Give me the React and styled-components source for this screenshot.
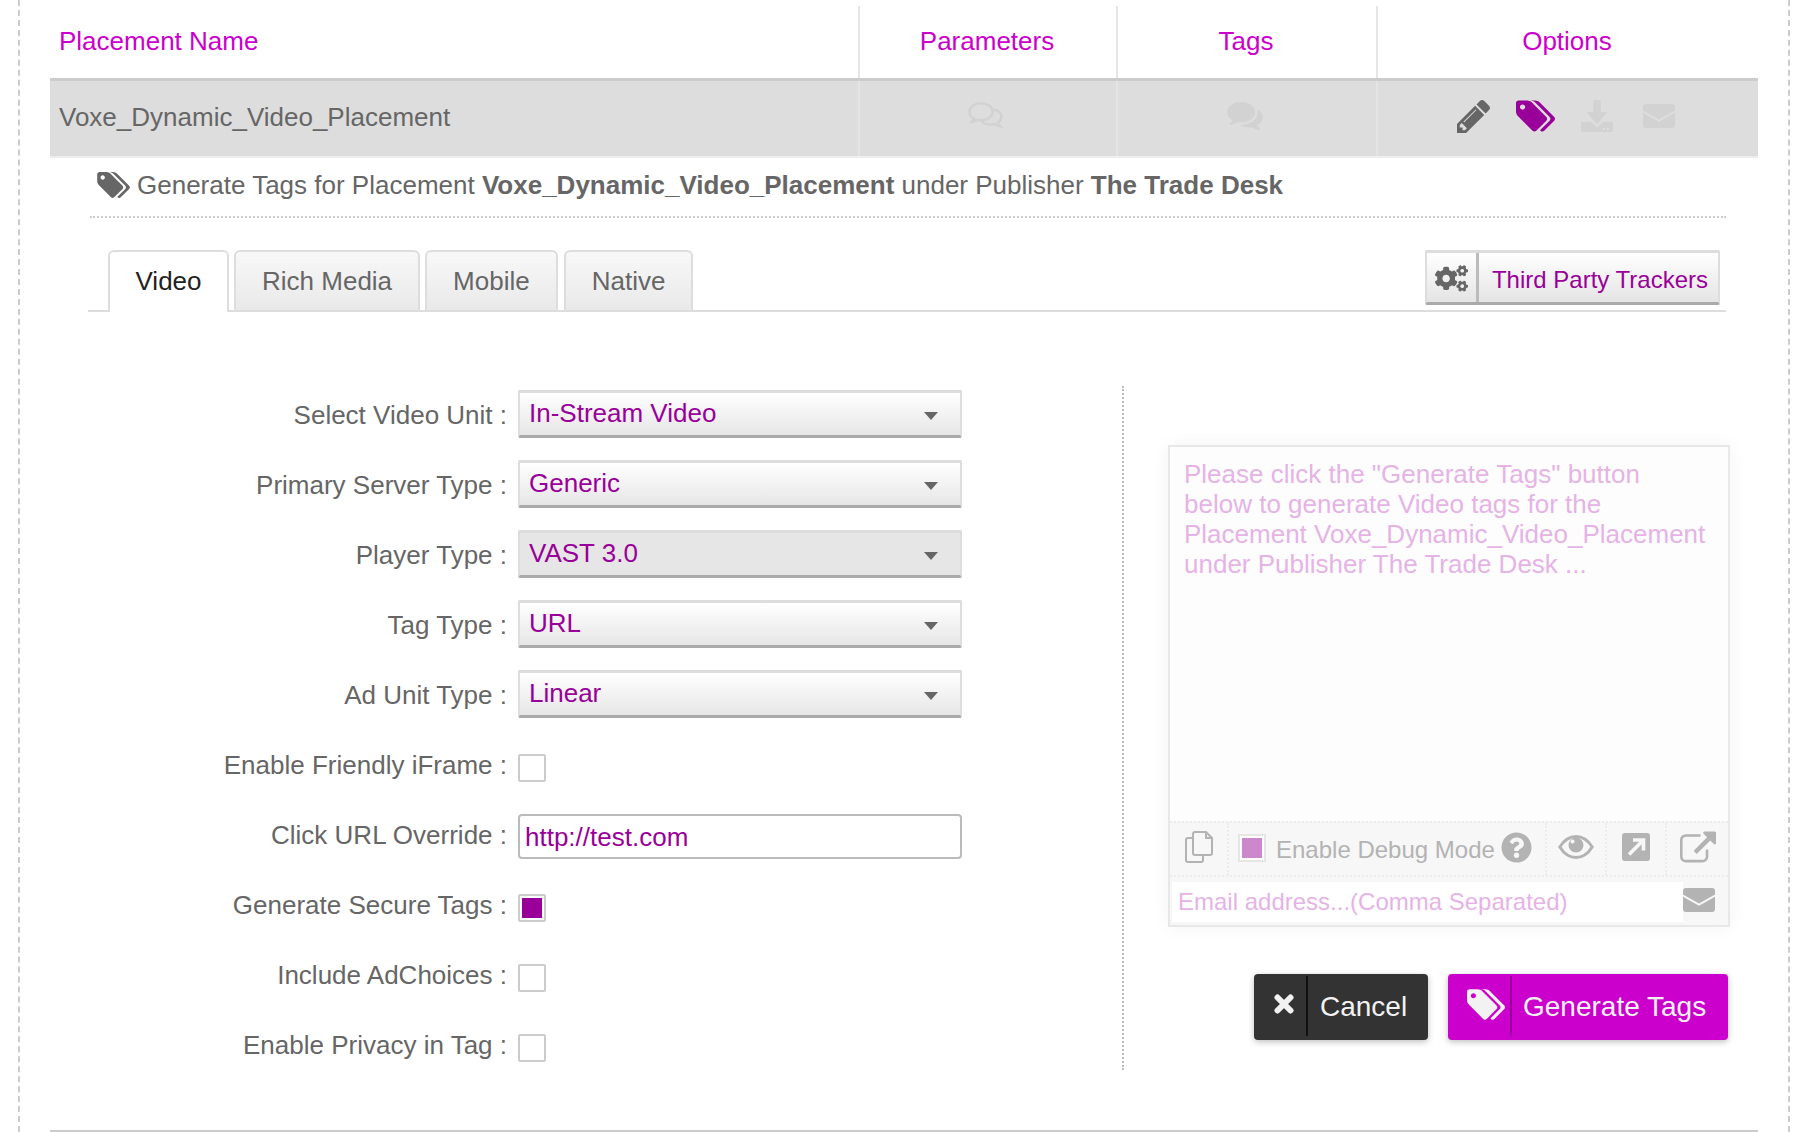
import React from 'react';
import styled, { createGlobalStyle } from 'styled-components';
import { FaCogs, FaQuestionCircle } from 'react-icons/fa';

const GlobalStyle = createGlobalStyle`
    html, body {
        margin: 0;
        padding: 0;
        background: #fff;
    }
    body {
        font-family: "Liberation Sans", Arial, sans-serif;
        font-size: 26px;
        color: #666;
    }
    * {
        box-sizing: border-box;
    }
`

const Frame = styled.div`
    height: 1132px;
    margin: 0 22px 0 18px;
    padding: 0 30px;
    border-left: 2px dashed #ccc;
    border-right: 2px dashed #ccc;
    overflow: hidden;
`

const HeaderRow = styled.div`
    display: grid;
    grid-template-columns: 808px 258px 260px 382px;
    height: 78px;
    padding-top: 6px;
`

const HeaderCell = styled.div`
    display: flex;
    align-items: center;
    justify-content: ${({ $left }) => ($left ? 'flex-start' : 'center')};
    padding: ${({ $left }) => ($left ? '0 0 2px 9px' : '0 2px 2px 0')};
    color: #cc00cc;
    border-left: ${({ $left }) => ($left ? 'none' : '2px solid #e6e6e6')};
`

const DataRow = styled.div`
    display: grid;
    grid-template-columns: 808px 258px 260px 382px;
    height: 80px;
    background: #ddd;
    border-top: 3px solid #ccc;
    border-bottom: 2px solid #eee;
`

const DataCell = styled.div`
    display: flex;
    align-items: center;
    justify-content: ${({ $left }) => ($left ? 'flex-start' : 'center')};
    gap: 26px;
    padding: ${({ $left }) => ($left ? '0 0 2px 9px' : '0 4px 5px 0')};
    border-left: ${({ $left }) => ($left ? 'none' : '2px solid #e4e4e4')};
`

const Heading = styled.div`
    display: flex;
    align-items: center;
    gap: 7px;
    margin: 0 32px 0 40px;
    padding: 12px 0 16px 7px;
    line-height: 30px;
    border-bottom: 2px dotted #ccc;
`

const TabBar = styled.div`
    display: flex;
    align-items: flex-start;
    height: 62px;
    margin: 32px 32px 0 38px;
    padding: 0 6px 0 20px;
    border-bottom: 2px solid #ddd;
`

const Tab = styled.div`
    display: flex;
    align-items: center;
    height: ${({ $active }) => ($active ? '62px' : '60px')};
    margin-right: ${({ $gap }) => $gap}px;
    padding: ${({ $active }) => ($active ? '0 25.5px 2px' : '0 26px')};
    border: 2px solid #ddd;
    border-bottom: none;
    border-radius: 6px 6px 0 0;
    color: ${({ $active }) => ($active ? '#222' : '#666')};
    background: ${({ $active }) => ($active ? '#fff' : 'linear-gradient(#f8f8f8, #e9e9e9)')};
`

const TrackerButton = styled.div`
    display: flex;
    height: 55px;
    margin-left: auto;
    border: 2px solid #ddd;
    border-top-width: 3px;
    border-bottom: 3px solid #aaa;
    border-radius: 2px;
    font-size: 24px;
    background: linear-gradient(#fff, #e4e4e4);
`

const TrackerIcon = styled.div`
    display: flex;
    align-items: center;
    justify-content: center;
    width: 52px;
    padding: 1px 0 0 1px;
    color: #666;
    border-right: 3px solid #bbb;
`

const TrackerLabel = styled.div`
    display: flex;
    align-items: center;
    padding: 4px 10px 0 13px;
    color: #990099;
`

const Body = styled.div`
    display: flex;
    align-items: flex-start;
    padding-top: 74px;
`

const FormColumn = styled.div`
    width: 1072px;
    padding-top: 4px;
`

const FormRow = styled.div`
    display: grid;
    grid-template-columns: 457px 444px;
    column-gap: 11px;
    align-items: start;
    height: 70px;
`

const Label = styled.div`
    line-height: 50px;
    text-align: right;
`

const Select = styled.div`
    display: flex;
    align-items: center;
    justify-content: space-between;
    height: 48px;
    padding: 0 22px 2px 9px;
    border: 2px solid #ddd;
    border-top-width: 3px;
    border-bottom: 3px solid #aaa;
    border-radius: 2px;
    color: #990099;
    background: ${({ $hover }) => ($hover ? '#e6e6e6' : 'linear-gradient(#fff, #e6e6e6)')};
`

const Arrow = styled.span`
    width: 0;
    height: 0;
    margin-top: 6px;
    border-left: 7px solid transparent;
    border-right: 7px solid transparent;
    border-top: 8px solid #666;
`

const UrlInput = styled.input`
    display: block;
    width: 100%;
    height: 45px;
    margin-top: 4px;
    padding: 2px 5px 0;
    border: 2px solid #bbb;
    border-radius: 4px;
    outline: none;
    color: #990099;
    font: inherit;
`

const Check = styled.div`
    width: 28px;
    height: 28px;
    margin-top: 14px;
    padding: 2px;
    border: 2px solid #ccc;
    border-radius: 2px;
    background: #fff;
    background-clip: padding-box;

    &::after {
        content: '';
        display: ${({ $on }) => ($on ? 'block' : 'none')};
        height: 100%;
        background: #990099;
    }
`

const RightColumn = styled.div`
    width: 608px;
    height: 684px;
    padding: 59px 0 0 44px;
    border-left: 2px dotted #bbb;
`

const Panel = styled.div`
    display: flex;
    flex-direction: column;
    height: 482px;
    border: 2px solid #e8e8e8;
    background: #fdfdfd;
    box-shadow: 0 0 18px rgba(0, 0, 0, 0.05);
`

const TagOutput = styled.div`
    flex: 1;
    padding: 12px 12px 0 14px;
    line-height: 30px;
    color: #e6b3e6;
`

const Toolbar = styled.div`
    display: grid;
    grid-template-columns: 59px 318px 60px 60px 61px;
    height: 54px;
    background: #f7f7f7;
    border-top: 2px dotted #ececec;
`

const ToolCell = styled.div`
    display: flex;
    align-items: center;
    justify-content: ${({ $wide }) => ($wide ? 'flex-start' : 'center')};
    padding: ${({ $wide }) => ($wide ? '0 0 4px 9px' : '0 0 4px')};
    color: #b3b3b3;
    font-size: 24px;
    white-space: nowrap;
    border-right: ${({ $last }) => ($last ? 'none' : '2px dotted #ececec')};
`

const DebugCheck = styled.div`
    flex: none;
    width: 28px;
    height: 28px;
    margin: 2px 10px 0 0;
    padding: 2px;
    border: 2px solid #e6e6e6;
    background: #fff;
    background-clip: padding-box;

    &::after {
        content: '';
        display: block;
        height: 100%;
        background: #cc88cc;
    }
`

const DebugLabel = styled.span`
    margin-right: 6px;
    padding-top: 6px;
`

const EmailRow = styled.div`
    display: flex;
    flex: none;
    justify-content: space-between;
    height: 50px;
    padding: 5px 13px 3px 2px;
    font-size: 24px;
    background: #f7f7f7;
    border-top: 2px dotted #ececec;
`

const EmailInput = styled.div`
    width: 518px;
    padding-left: 6px;
    line-height: 40px;
    color: #e6b3e6;
    background: #fff;
`

const MailSlot = styled.div`
    padding-top: 6px;
    color: #b3b3b3;
`

const Actions = styled.div`
    display: flex;
    justify-content: flex-end;
    gap: 20px;
    margin: 47px 2px 0 0;
`

const ActionButton = styled.div`
    display: flex;
    width: ${({ $width }) => $width}px;
    height: 66px;
    padding: 2px 0 4px;
    border-radius: 4px;
    color: #f2f2f2;
    font-size: 28px;
    background: ${({ $bg }) => $bg};
    box-shadow: 0 2px 6px rgba(0, 0, 0, 0.25);
`

const ActionIcon = styled.div`
    display: flex;
    flex: none;
    align-items: center;
    justify-content: center;
    width: ${({ $width }) => $width}px;
    padding: 0 0 4px ${({ $nudge }) => $nudge}px;
    border-right: 2px solid ${({ $line }) => $line};
`

const ActionLabel = styled.div`
    display: flex;
    align-items: center;
    padding: 2px 0 0 ${({ $pad }) => $pad}px;
`

const FooterRule = styled.div`
    height: 2px;
    margin-top: 40px;
    background: #ccc;
`

const Glyph = styled.svg`
    display: block;
    flex: none;
    width: ${({ $w }) => $w}px;
    height: ${({ $h }) => $h}px;
    margin-left: ${({ $ml }) => $ml || 0}px;
    color: ${({ $color }) => $color || 'inherit'};
    fill: currentColor;
`

const TAGS = 'M384 448q0-53-37.5-90.5t-90.5-37.5-90.5 37.5-37.5 90.5 37.5 90.5 90.5 37.5 90.5-37.5 37.5-90.5zm1067 576q0 53-37 90l-491 492q-39 37-91 37-53 0-90-37l-715-716q-38-37-64.5-101t-26.5-117v-416q0-52 38-90t90-38h416q53 0 117 26.5t102 64.5l715 714q37 39 37 91zm384 0q0 53-37 90l-491 492q-39 37-91 37-36 0-59-14t-53-45l470-470q37-37 37-90 0-52-37-91l-715-714q-38-38-102-64.5t-117-26.5h224q53 0 117 26.5t102 64.5l715 714q37 39 37 91z';
const PENCIL = 'M491 1536l91-91-235-235-91 91v107h128v128h107zm523-928q0-22-22-22-10 0-17 7l-542 542q-7 7-7 17 0 22 22 22 10 0 17-7l542-542q7-7 7-17zm-54-192l416 416-832 832h-416v-416zm683 96q0 53-37 90l-166 166-416-416 166-165q36-38 90-38 53 0 91 38l235 234q37 39 37 91z';
const COMMENTS = 'M1408 768q0 139-94 257t-256.5 186.5-353.5 68.5q-86 0-176-16-124 88-278 128-36 9-86 16h-3q-11 0-20.5-8t-11.5-21q-1-3-1-6.5t.5-6.5 2-6l2.5-5 3.5-5.5 4-5 4.5-5 4-4.5q5-6 23-25t26-29.5 22.5-29 25-38.5 20.5-44q-124-72-195-177t-71-224q0-139 94-257t256.5-186.5 353.5-68.5 353.5 68.5 256.5 186.5 94 257zm384 256q0 120-71 224.5t-195 176.5q10 24 20.5 44t25 38.5 22.5 29 26 29.5 23 25q1 1 4 4.5t4.5 5 4 5 3.5 5.5l2.5 5 2 6 .5 6.5-1 6.5q-3 14-13 22t-22 7q-50-7-86-16-154-40-278-128-90 16-176 16-271 0-472-132 58 4 88 4 161 0 309-45t264-129q125-92 192-212t67-254q0-77-23-152 129 71 204 178t75 230z';
const EXTERNAL = 'M1408 928v320q0 119-84.5 203.5t-203.5 84.5h-832q-119 0-203.5-84.5t-84.5-203.5v-832q0-119 84.5-203.5t203.5-84.5h704q14 0 23 9t9 23v64q0 14-9 23t-23 9h-704q-66 0-113 47t-47 113v832q0 66 47 113t113 47h832q66 0 113-47t47-113v-320q0-14 9-23t23-9h64q14 0 23 9t9 23zm384-864v512q0 26-19 45t-45 19-45-19l-176-176-652 652q-10 10-23 10t-23-10l-114-114q-10-10-10-23t10-23l652-652-176-176q-19-19-19-45t19-45 45-19h512q26 0 45 19t19 45z';

const TagsIcon = ({ w, h, color }) => (
    <Glyph $w={w} $h={h} $color={color} viewBox="-64 128 1899 1515">
        <path d={TAGS} fillRule="evenodd" />
    </Glyph>
);

const MailIcon = ({ color, gap }) => (
    <Glyph $w={32} $h={24} $ml={gap} $color={color} viewBox="0 0 32 24">
        <path d="M3 0h26a3 3 0 0 1 3 3v3.4L16 15.4 0 6.4V3a3 3 0 0 1 3-3z" />
        <path d="M0 8.8l16 9 16-9V21a3 3 0 0 1-3 3H3a3 3 0 0 1-3-3z" />
    </Glyph>
);

const DownloadIcon = () => (
    <Glyph $w={32} $h={32} $color="#d2d2d2" viewBox="0 0 32 32">
        <path d="M12.2 1.500A1.500 1.500 0 0 1 13.700 0h4.600a1.500 1.500 0 0 1 1.500 1.500V12h6.700L16 24.500 5.500 12h6.700z" />
        <path d="M0 23.700a2 2 0 0 1 2-2h7.500l6.500 6 6.500-6H30a2 2 0 0 1 2 2V30a2 2 0 0 1-2 2H2a2 2 0 0 1-2-2z" />
        <rect x="22" y="28" width="2" height="2" fill="#ddd" />
        <rect x="26" y="28" width="2" height="2" fill="#ddd" />
    </Glyph>
);

const CommentsOutline = () => (
    <Glyph $w={36} $h={28} $color="#d2d2d2" viewBox="0 0 36 28">
        <g fill="none" stroke="currentColor" strokeWidth="2.6">
            <path d="M6 16.5C3 15 1.3 12.5 1.3 9.8 1.3 5 6.5 1.3 13 1.3s11.7 3.7 11.7 8.5S19.5 18.3 13 18.3c-1.4 0-2.8-.2-4-.5-1.6 1-3.2 1.6-5 1.9.9-1 1.6-2.1 2-3.2z" />
            <path d="M25.5 7.5c4.5 1 8 3.8 8 7.3 0 2.4-1.5 4.5-3.7 5.8.4 1.2 1.2 2.4 2.3 3.6-2.2-.3-4.2-1-6-2.2-1.3.3-2.6.5-4 .5-3.8 0-7-1.5-8.5-3.8" />
        </g>
    </Glyph>
);

const CopyIcon = () => (
    <Glyph $w={28} $h={32} viewBox="0 0 28 32">
        <g fill="none" stroke="currentColor" strokeWidth="2">
            <path d="M10 1h11l6 6v15a2 2 0 0 1-2 2H10a2 2 0 0 1-2-2V3a2 2 0 0 1 2-2z" />
            <path d="M21 1v6h6" />
            <path d="M8 7H3a2 2 0 0 0-2 2v20a2 2 0 0 0 2 2h13a2 2 0 0 0 2-2v-5" />
        </g>
    </Glyph>
);

const EyeIcon = () => (
    <Glyph $w={36} $h={24} viewBox="0 0 36 24">
        <path fill="none" stroke="currentColor" strokeWidth="3" d="M1.8 12C6.5 4.500 12 1.500 18 1.500S29.500 4.500 34.200 12C29.500 19.500 24 22.500 18 22.500S6.500 19.500 1.800 12z" />
        <circle cx="18" cy="10" r="7.5" />
        <circle cx="14.5" cy="6.5" r="2" fill="#f7f7f7" />
    </Glyph>
);

const ExpandIcon = () => (
    <Glyph $w={28} $h={28} viewBox="0 0 28 28">
        <rect width="28" height="28" rx="3" />
        <path fill="none" stroke="#f7f7f7" strokeWidth="3.6" d="M7 21.5L20 8.5M11 7h10.5v10.5" />
    </Glyph>
);

const CrossIcon = () => (
    <Glyph $w={20} $h={20} viewBox="0 0 20 20">
        <path fill="none" stroke="currentColor" strokeWidth="6" strokeLinecap="round" d="M3.5 3.5L16.5 16.5M16.5 3.5L3.5 16.5" />
    </Glyph>
);

const fields = [
    { label: 'Select Video Unit :', value: 'In-Stream Video' },
    { label: 'Primary Server Type :', value: 'Generic' },
    { label: 'Player Type :', value: 'VAST 3.0', hover: true },
    { label: 'Tag Type :', value: 'URL' },
    { label: 'Ad Unit Type :', value: 'Linear' },
    { label: 'Enable Friendly iFrame :', check: true },
    { label: 'Click URL Override :', url: 'http://test.com' },
    { label: 'Generate Secure Tags :', check: true, on: true },
    { label: 'Include AdChoices :', check: true },
    { label: 'Enable Privacy in Tag :', check: true },
];

const App = () => {
    return (
        <Frame>
            <GlobalStyle />
            <HeaderRow>
                <HeaderCell $left>Placement Name</HeaderCell>
                <HeaderCell>Parameters</HeaderCell>
                <HeaderCell>Tags</HeaderCell>
                <HeaderCell>Options</HeaderCell>
            </HeaderRow>
            <DataRow>
                <DataCell $left>Voxe_Dynamic_Video_Placement</DataCell>
                <DataCell><CommentsOutline /></DataCell>
                <DataCell>
                    <Glyph $w={36} $h={28} $color="#d2d2d2" viewBox="0 256 1792 1408"><path d={COMMENTS} /></Glyph>
                </DataCell>
                <DataCell>
                    <Glyph $w={33} $h={33} $color="#666" viewBox="128 149 1515 1515"><path d={PENCIL} fillRule="evenodd" /></Glyph>
                    <TagsIcon w={39} h={32} color="#990099" />
                    <DownloadIcon />
                    <MailIcon color="#d2d2d2" gap={4} />
                </DataCell>
            </DataRow>
            <Heading>
                <TagsIcon w={33} h={26} color="#666" />
                <span>Generate Tags for Placement <b>Voxe_Dynamic_Video_Placement</b> under Publisher <b>The Trade Desk</b></span>
            </Heading>
            <TabBar>
                <Tab $active $gap={5}>Video</Tab>
                <Tab $gap={5}>Rich Media</Tab>
                <Tab $gap={6}>Mobile</Tab>
                <Tab $gap={0}>Native</Tab>
                <TrackerButton>
                    <TrackerIcon><FaCogs size={33} /></TrackerIcon>
                    <TrackerLabel>Third Party Trackers</TrackerLabel>
                </TrackerButton>
            </TabBar>
            <Body>
                <FormColumn>
                    {fields.map((field) => (
                        <FormRow key={field.label}>
                            <Label>{field.label}</Label>
                            {field.value && (
                                <Select $hover={field.hover}>
                                    {field.value}
                                    <Arrow />
                                </Select>
                            )}
                            {field.check && <Check $on={field.on} />}
                            {field.url && <UrlInput readOnly value={field.url} />}
                        </FormRow>
                    ))}
                </FormColumn>
                <RightColumn>
                    <Panel>
                        <TagOutput>
                            Please click the "Generate Tags" button<br />
                            below to generate Video tags for the<br />
                            Placement Voxe_Dynamic_Video_Placement<br />
                            under Publisher The Trade Desk ...
                        </TagOutput>
                        <Toolbar>
                            <ToolCell><CopyIcon /></ToolCell>
                            <ToolCell $wide>
                                <DebugCheck />
                                <DebugLabel>Enable Debug Mode</DebugLabel>
                                <FaQuestionCircle size={31} />
                            </ToolCell>
                            <ToolCell><EyeIcon /></ToolCell>
                            <ToolCell><ExpandIcon /></ToolCell>
                            <ToolCell $last>
                                <Glyph $w={36} $h={32} viewBox="0 0 1792 1536"><path d={EXTERNAL} fillRule="evenodd" /></Glyph>
                            </ToolCell>
                        </Toolbar>
                        <EmailRow>
                            <EmailInput>Email address...(Comma Separated)</EmailInput>
                            <MailSlot><MailIcon /></MailSlot>
                        </EmailRow>
                    </Panel>
                    <Actions>
                        <ActionButton $width={174} $bg="#333">
                            <ActionIcon $width={54} $line="#111" $nudge={7}><CrossIcon /></ActionIcon>
                            <ActionLabel $pad={12}>Cancel</ActionLabel>
                        </ActionButton>
                        <ActionButton $width={280} $bg="#cc00cc">
                            <ActionIcon $width={64} $line="#990099" $nudge={14}><TagsIcon w={38} h={31} color="#f2f2f2" /></ActionIcon>
                            <ActionLabel $pad={11}>Generate Tags</ActionLabel>
                        </ActionButton>
                    </Actions>
                </RightColumn>
            </Body>
            <FooterRule />
        </Frame>
    );
};

export default App;
